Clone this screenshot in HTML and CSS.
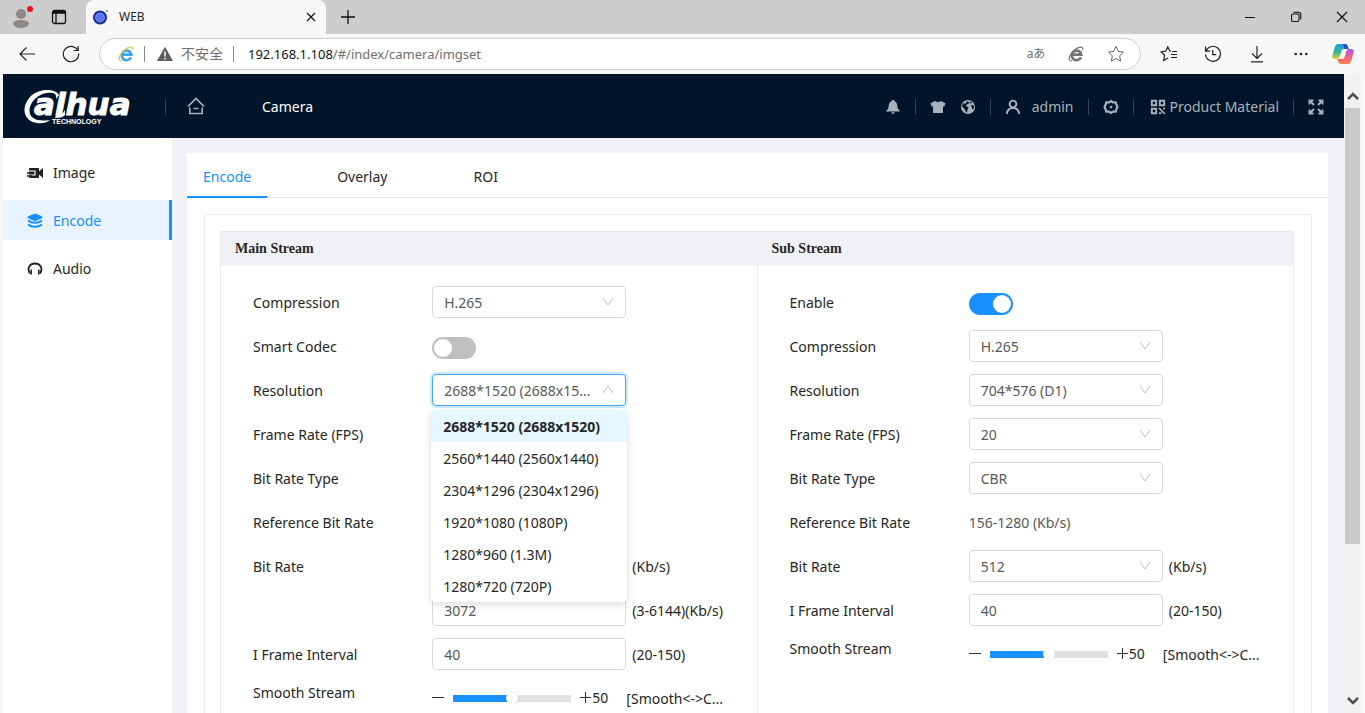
FILE: index.html
```html
<!DOCTYPE html>
<html lang="en">
<head>
    <meta charset="UTF-8">
    <meta name="viewport" content="width=device-width, initial-scale=1.0">
    <title>WEB</title>
    <link rel="stylesheet" href="styles.css">
</head>
<body>
    <!-- Browser window -->
    <div class="tab-strip">
        <button class="strip-btn profile" type="button" aria-label="Profile">
            <svg width="24" height="24" viewBox="0 0 24 24"><circle cx="11" cy="9" r="5" fill="#8b8886"/><path d="M3 19q0-4 8-4t8 4q-2 4-8 4t-8-4z" fill="#8b8886"/><circle cx="20" cy="4" r="3" fill="#e81123"/></svg>
        </button>
        <button class="strip-btn" type="button" aria-label="Tab actions">
            <svg width="16" height="16" viewBox="0 0 16 16" fill="none" stroke="#111" stroke-width="1.300"><rect x="1.500" y="1.500" width="13" height="13" rx="2"/><path d="M1.500 4h13M5 4v10" /><path d="M2 3h12" stroke-width="2"/></svg>
        </button>
        <div class="browser-tab">
            <svg width="16" height="16" viewBox="0 0 16 16"><circle cx="8" cy="8.500" r="7" fill="#1b2f9c"/><circle cx="8" cy="8.500" r="4.500" fill="#5b74f2" stroke="#a9b6ff" stroke-width=".6"/><circle cx="15" cy="2" r="1" fill="#b0703c"/></svg>
            <span class="browser-tab-title">WEB</span>
            <button class="icon-btn" type="button" aria-label="Close tab">
                <svg width="10" height="10" viewBox="0 0 10 10" stroke="#111" stroke-width="1.200"><path d="M1 1l8 8M9 1l-8 8"/></svg>
            </button>
        </div>
        <button class="strip-btn" type="button" aria-label="New tab">
            <svg width="14" height="14" viewBox="0 0 14 14" stroke="#111" stroke-width="1.300"><path d="M7 0v14M0 7h14"/></svg>
        </button>
        <div class="window-controls">
            <button type="button" aria-label="Minimize"><svg width="12" height="12" viewBox="0 0 12 12" stroke="#111"><path d="M1 6.500h10"/></svg></button>
            <button type="button" aria-label="Restore"><svg width="12" height="12" viewBox="0 0 12 12" fill="none" stroke="#111" stroke-width="1.100"><rect x="1.500" y="3" width="7.500" height="7.500" rx="1.500"/><path d="M3.500 1.200H8.500q2.300 0 2.300 2.300v5"/></svg></button>
            <button type="button" aria-label="Close"><svg width="12" height="12" viewBox="0 0 12 12" stroke="#111" stroke-width="1.200"><path d="M1 1l10 10M11 1L1 11"/></svg></button>
        </div>
    </div>

    <div class="toolbar">
        <button class="tool-btn" type="button" aria-label="Back">
            <svg width="18" height="16" viewBox="0 0 18 16" fill="none" stroke="#222" stroke-width="1.200"><path d="M17 8H2M8.500 1.500L2 8l6.500 6.500"/></svg>
        </button>
        <button class="tool-btn" type="button" aria-label="Refresh">
            <svg width="18" height="18" viewBox="0 0 18 18" fill="none" stroke="#222" stroke-width="1.200"><path d="M16.700 8.500A7.700 7.700 0 1 1 13.800 3L16 5M16.200 1v4.500h-4.700"/></svg>
        </button>
        <div class="address-bar">
            <svg width="16" height="16" viewBox="0 0 16 16" fill="none"><path d="M13 11.200A4.800 4.800 0 1 1 13.300 8.600H4.500" stroke="#3aa5e0" stroke-width="2.700"/><path d="M4 14.500C0 16 0 10 5.500 5S15.500 0 14.800 4" stroke="#c3cf4a" stroke-width="1.200"/></svg>
            <span class="bar-line"></span>
            <svg width="16" height="16" viewBox="0 0 16 16"><path d="M8 .8L16 15H0z" fill="#5c5c5c"/><path d="M8 5.500v5M8 11.800v1.600" stroke="#fff" stroke-width="1.500"/></svg>
            <span class="not-secure" lang="zh">不安全</span>
            <span class="bar-line url-line"></span>
            <div class="url" role="textbox" aria-label="Address" contenteditable="true" spellcheck="false"><span class="url-host">192.168.1.108</span>/#/index/camera/imgset</div>
            <button class="addr-btn translate" type="button">aあ</button>
            <button class="addr-btn" type="button" aria-label="Internet Explorer mode">
                <svg width="16" height="16" viewBox="0 0 16 16" fill="none"><path d="M13 11.200A4.800 4.800 0 1 1 13.300 8.600H4.500" stroke="#757575" stroke-width="2.700"/><path d="M4 14.500C0 16 0 10 5.500 5S15.500 0 14.800 4" stroke="#757575" stroke-width="1.100"/></svg>
            </button>
            <button class="addr-btn" type="button" aria-label="Add to favorites">
                <svg width="18" height="18" viewBox="0 0 18 18" fill="none" stroke="#666"><path d="M9 1.500l2.300 4.900 5.200.7-3.800 3.700.9 5.300L9 13.500l-4.600 2.600.9-5.300L1.500 7.100l5.200-.7z"/></svg>
            </button>
        </div>
        <button class="tool-btn" type="button" aria-label="Favorites">
            <svg width="18" height="18" viewBox="0 0 18 18" fill="none" stroke="#222" stroke-width="1.200"><path d="M11 6H9.800L7.800 1.800 5.800 6 1.200 6.800l3.400 3.500-.9 5.200 4.300-2.400M12 6.500h5M11 9.500h6M11 12.500h6"/></svg>
        </button>
        <button class="tool-btn" type="button" aria-label="History">
            <svg width="18" height="18" viewBox="0 0 18 18" fill="none" stroke="#222" stroke-width="1.200"><path d="M1.500 1.500v4.700h4.700M2 6A7.500 7.500 0 1 1 1.500 9.500M8.700 5v4.700h3.500"/></svg>
        </button>
        <button class="tool-btn" type="button" aria-label="Downloads">
            <svg width="14" height="18" viewBox="0 0 14 18" fill="none" stroke="#222" stroke-width="1.200"><path d="M7 1v12M2 8.500l5 5 5-5M1 16.800h12"/></svg>
        </button>
        <button class="tool-btn" type="button" aria-label="Settings and more">
            <svg width="14" height="4" viewBox="0 0 14 4" fill="#222"><circle cx="1.700" cy="2" r="1.300"/><circle cx="7" cy="2" r="1.300"/><circle cx="12.300" cy="2" r="1.300"/></svg>
        </button>
        <button class="tool-btn copilot" type="button" aria-label="Copilot">
            <svg width="22" height="22" viewBox="0 0 22 22">
                <defs>
                    <linearGradient id="cp1" x1="0" y1="0" x2="0" y2="1"><stop offset="0" stop-color="#1a9be8"/><stop offset=".6" stop-color="#3dbb8a"/><stop offset="1" stop-color="#f0cf28"/></linearGradient>
                    <linearGradient id="cp2" x1="0" y1="0" x2="0" y2="1"><stop offset="0" stop-color="#a35be8"/><stop offset=".5" stop-color="#ef5f8d"/><stop offset="1" stop-color="#f7824a"/></linearGradient>
                </defs>
                <path d="M6 1h7q2 0 2.600 2l1 3H12q-2 0-2.600 2L7.600 14q-.6 2-2.600 2H2.500Q-.5 16 .4 12.500L3 3.500Q3.800 1 6 1z" fill="url(#cp1)"/>
                <path d="M11 1h2q2 0 2.600 2l1 3h-4z" fill="#1a49c8"/>
                <path d="M16 21H9q-2 0-2.600-2l-1-3H10q2 0 2.600-2L14.400 8q.6-2 2.600-2h2.500q3 0 2.100 3.500L19 18.500q-.8 2.500-3 2.500z" fill="url(#cp2)"/>
            </svg>
        </button>
    </div>

    <div class="viewport">
        <div class="page">
            <header class="header">
                <svg class="logo" width="110" height="52" viewBox="0 0 110 52" role="img" aria-label="alhua technology">
                    <text class="logo-name" x="11" y="34">alhua</text>
                    <path d="M36 14C32 7 15 7 7 16C-2 26 0 40 14 42Q22 43 27 39Q14 41 9 36C1 27 14 9 30 12Q34 13 33 18z" fill="#fff"/>
                    <path d="M33 34Q39 35 42 29L42 34Q40 37 32 37z" fill="#fff"/>
                    <text class="logo-sub" x="29" y="43">TECHNOLOGY</text>
                </svg>
                <span class="divider"></span>
                <a class="home" href="#" aria-label="Home">
                    <svg width="18" height="20" viewBox="0 0 18 20" fill="none" stroke="#a6b1bd" stroke-width="1.700"><path d="M1 9.500L9 1.500l8 8M2.800 10.500v6h12.400v-6M6.500 11.500h5"/></svg>
                </a>
                <a class="crumb" href="#">Camera</a>
                <div class="header-tools">
                    <button type="button" aria-label="Alarm"><svg width="16" height="16" viewBox="0 0 16 16" fill="#a6b1bd"><path d="M8 0.800q1.200 0 1.200 1.300Q12 3 12.300 7q.2 3.500 2.400 4.500v1H1.300v-1Q3.500 10.500 3.700 7 4 3 6.800 2.100 6.800.8 8 .8zM6.300 13.200h3.400q-.3 1.800-1.700 1.800t-1.700-1.800z"/></svg></button>
                    <span class="divider"></span>
                    <button type="button" aria-label="Theme"><svg width="16" height="16" viewBox="0 0 16 16" fill="#a6b1bd"><path d="M5 2q3 2 6 0l4.500 2.200-1.300 3.500-1.200-.4V14H3V7.300l-1.200.4L.5 4.200z"/></svg></button>
                    <button type="button" aria-label="Language"><svg width="16" height="16" viewBox="0 0 16 16"><circle cx="8" cy="8" r="7" fill="#a6b1bd"/><path d="M7 2.200l2.200 1L8.500 5l-2 .5L6 7.300l2.500 1L7.500 11l-1 3-2-4L2 7.300 3 4.200l2.500.5zM11 6l3 .5-.3 3.500-1.500-.3zM9.500 2l3 2-2 .5z" fill="#001529"/></svg></button>
                    <span class="divider"></span>
                    <button class="user" type="button"><svg width="16" height="16" viewBox="0 0 16 16" fill="none" stroke="#a6b1bd" stroke-width="1.900"><circle cx="8" cy="5" r="3.400"/><path d="M1.800 15q.7-6 6.200-6t6.200 6"/></svg>admin</button>
                    <span class="divider"></span>
                    <button type="button" aria-label="Settings"><svg width="16" height="16" viewBox="0 0 16 16" fill="none" stroke="#a6b1bd"><path d="M8 2l2 1.300h2.700L13.500 6 14.500 8l-1 2-.8 2.700H10L8 14l-2-1.300H3.300L2.500 10l-1-2 1-2 .8-2.700H6z" stroke-width="2.200"/><circle cx="8" cy="8" r="1.300" fill="#a6b1bd" stroke="none"/></svg></button>
                    <span class="divider"></span>
                    <button class="material" type="button"><svg width="16" height="16" viewBox="0 0 16 16" fill="none" stroke="#a6b1bd" stroke-width="1.900"><path d="M1.800 1.800h4.400v4.400H1.800zM9.800 1.800h4.400v4.400H9.800zM1.800 9.800h4.400v4.400H1.800z"/><path d="M9 9l6 6M13 9.500h2M9 14.200h2.500" stroke-width="1.700"/></svg>Product Material</button>
                    <span class="divider"></span>
                    <button type="button" aria-label="Full screen"><svg width="16" height="16" viewBox="0 0 16 16" fill="none" stroke="#a6b1bd" stroke-width="1.900"><path d="M1.500 5.500v-4h4M1.500 1.500L6 6M10.500 1.500h4v4M14.500 1.500L10 6M14.500 10.500v4h-4M14.500 14.500L10 10M5.500 14.500h-4v-4M1.500 14.500L6 10"/></svg></button>
                </div>
            </header>

            <div class="main">
                <nav class="sidebar">
                    <a class="menu-item" href="#">
                        <svg width="16" height="16" viewBox="0 0 16 16"><path d="M3 3h8q1 0 1 1v8q0 1-1 1H3q-1 0-1-1V4q0-1 1-1z" fill="#222"/><path d="M0 6h8v4H1.500" stroke="#fff" stroke-width="1.200" fill="none"/><path d="M0 8h7M0 11h5" stroke="#222" stroke-width="1.300"/><path d="M12 6.500L16 3v10l-4-3.500z" fill="#222"/></svg>
                        Image
                    </a>
                    <a class="menu-item active" href="#">
                        <svg width="16" height="16" viewBox="0 0 16 16"><path d="M1 3.800L8 1l7 2.800v1L8 7.600 1 4.800z" fill="#1890ff" stroke="#1890ff" stroke-linejoin="round"/><path d="M1 7.500q3 2.300 7 2.300t7-2.300M1 11.500q3 2.300 7 2.300t7-2.300" fill="none" stroke="#1890ff" stroke-width="2"/></svg>
                        Encode
                    </a>
                    <a class="menu-item" href="#">
                        <svg width="16" height="16" viewBox="0 0 16 16" fill="none" stroke="#222"><path d="M3 12.500C-.5 7 3 2.500 8 2.500s8.500 4.500 5 10" stroke-width="1.800"/><path d="M4.200 8.500v5M11.800 8.500v5" stroke-width="1.600"/></svg>
                        Audio
                    </a>
                </nav>

                <main class="content">
                    <div class="tabs">
                        <button class="tab active" type="button">Encode</button>
                        <button class="tab" type="button">Overlay</button>
                        <button class="tab" type="button">ROI</button>
                    </div>
                    <div class="tab-body">
                        <div class="streams">
                            <section class="stream">
                                <h2>Main Stream</h2>
                                <form class="form">
                                    <div class="row">
                                        <label for="m-comp">Compression</label>
                                        <select id="m-comp"><option>H.265</option></select>
                                    </div>
                                    <div class="row">
                                        <label for="m-smart">Smart Codec</label>
                                        <input class="switch" type="checkbox" id="m-smart">
                                    </div>
                                    <div class="row">
                                        <label for="m-res">Resolution</label>
                                        <div class="select-wrap">
                                            <select class="open" id="m-res"><option>2688*1520 (2688x1520)</option></select>
                                            <ul class="dropdown" role="listbox" aria-label="Resolution">
                                                <li class="selected" role="option" aria-selected="true">2688*1520 (2688x1520)</li>
                                                <li role="option">2560*1440 (2560x1440)</li>
                                                <li role="option">2304*1296 (2304x1296)</li>
                                                <li role="option">1920*1080 (1080P)</li>
                                                <li role="option">1280*960 (1.3M)</li>
                                                <li role="option">1280*720 (720P)</li>
                                            </ul>
                                        </div>
                                    </div>
                                    <div class="row">
                                        <label for="m-fps">Frame Rate (FPS)</label>
                                        <select id="m-fps"></select>
                                    </div>
                                    <div class="row">
                                        <label for="m-type">Bit Rate Type</label>
                                        <select id="m-type"></select>
                                    </div>
                                    <div class="row">
                                        <span>Reference Bit Rate</span>
                                    </div>
                                    <div class="row">
                                        <label for="m-rate">Bit Rate</label>
                                        <select id="m-rate"></select>
                                        <span class="unit">(Kb/s)</span>
                                    </div>
                                    <div class="row">
                                        <span></span>
                                        <input class="text" type="text" value="3072" aria-label="Custom bit rate">
                                        <span class="unit">(3-6144)(Kb/s)</span>
                                    </div>
                                    <div class="row">
                                        <label for="m-iframe">I Frame Interval</label>
                                        <input class="text" type="text" id="m-iframe" value="40">
                                        <span class="unit">(20-150)</span>
                                    </div>
                                    <div class="row slider-row">
                                        <label for="m-smooth">Smooth Stream</label>
                                        <div class="slider">
                                            <button class="step" type="button" aria-label="Decrease"><svg width="12" height="12" viewBox="0 0 12 12" stroke="#333"><path d="M0 5.500h12"/></svg></button>
                                            <input type="range" id="m-smooth" min="0" max="100" value="50">
                                            <button class="step" type="button" aria-label="Increase"><svg width="12" height="12" viewBox="0 0 12 12" stroke="#333"><path d="M0 5.500h11M5.500 0v11"/></svg></button>
                                            <output>50</output>
                                        </div>
                                        <span>[Smooth&lt;-&gt;C...</span>
                                    </div>
                                </form>
                            </section>

                            <section class="stream">
                                <h2>Sub Stream</h2>
                                <form class="form">
                                    <div class="row">
                                        <label for="s-enable">Enable</label>
                                        <input class="switch" type="checkbox" id="s-enable" checked>
                                    </div>
                                    <div class="row">
                                        <label for="s-comp">Compression</label>
                                        <select id="s-comp"><option>H.265</option></select>
                                    </div>
                                    <div class="row">
                                        <label for="s-res">Resolution</label>
                                        <select id="s-res"><option>704*576 (D1)</option></select>
                                    </div>
                                    <div class="row">
                                        <label for="s-fps">Frame Rate (FPS)</label>
                                        <select id="s-fps"><option>20</option></select>
                                    </div>
                                    <div class="row">
                                        <label for="s-type">Bit Rate Type</label>
                                        <select id="s-type"><option>CBR</option></select>
                                    </div>
                                    <div class="row">
                                        <span>Reference Bit Rate</span>
                                        <span class="value">156-1280 (Kb/s)</span>
                                    </div>
                                    <div class="row">
                                        <label for="s-rate">Bit Rate</label>
                                        <select id="s-rate"><option>512</option></select>
                                        <span class="unit">(Kb/s)</span>
                                    </div>
                                    <div class="row">
                                        <label for="s-iframe">I Frame Interval</label>
                                        <input class="text" type="text" id="s-iframe" value="40">
                                        <span class="unit">(20-150)</span>
                                    </div>
                                    <div class="row slider-row">
                                        <label for="s-smooth">Smooth Stream</label>
                                        <div class="slider">
                                            <button class="step" type="button" aria-label="Decrease"><svg width="12" height="12" viewBox="0 0 12 12" stroke="#333"><path d="M0 5.500h12"/></svg></button>
                                            <input type="range" id="s-smooth" min="0" max="100" value="50">
                                            <button class="step" type="button" aria-label="Increase"><svg width="12" height="12" viewBox="0 0 12 12" stroke="#333"><path d="M0 5.500h11M5.500 0v11"/></svg></button>
                                            <output>50</output>
                                        </div>
                                        <span>[Smooth&lt;-&gt;C...</span>
                                    </div>
                                </form>
                            </section>
                        </div>
                    </div>
                </main>
            </div>
        </div>

        <div class="scrollbar">
            <svg width="12" height="8" viewBox="0 0 12 8" fill="none" stroke="#505050" stroke-width="2.500"><path d="M1 7l5-5 5 5"/></svg>
            <div class="scroll-track"><div class="scroll-thumb"></div></div>
            <svg width="12" height="8" viewBox="0 0 12 8" fill="none" stroke="#505050" stroke-width="2.500"><path d="M1 1l5 5 5-5"/></svg>
        </div>
    </div>
</body>
</html>
```
FILE: styles.css
```css
* {
    box-sizing: border-box;
}
body {
    margin: 0;
    height: 100vh;
    display: flex;
    flex-direction: column;
    overflow: hidden;
    font-family: 'Noto Sans', 'Noto Sans CJK SC', sans-serif;
    font-size: 14px;
    line-height: 20px;
    color: #262626;
    background: #f7f7f7;
}
button {
    border: 0;
    padding: 0;
    background: none;
    font: inherit;
    color: inherit;
    display: flex;
    align-items: center;
    justify-content: center;
}
a {
    color: inherit;
    text-decoration: none;
}
svg {
    display: block;
    flex: none;
}

/* Browser window */
.tab-strip {
    display: flex;
    flex: none;
    height: 34px;
    background: #cdcdcd;
}
.strip-btn {
    width: 44px;
}
.strip-btn.profile {
    width: 37px;
    padding-left: 6px;
}
.browser-tab {
    display: flex;
    align-items: center;
    width: 240px;
    margin-left: 5px;
    padding: 0 10px 0 6px;
    background: #f7f7f7;
    border-radius: 8px 8px 0 0;
    font-size: 12px;
}
.browser-tab-title {
    flex: 1;
    margin-left: 11px;
}
.window-controls {
    display: flex;
    margin-left: auto;
}
.window-controls button {
    width: 46px;
}
.toolbar {
    display: flex;
    flex: none;
    align-items: center;
    height: 40px;
    padding: 0 2px 0 5px;
}
.tool-btn {
    width: 44px;
    height: 32px;
}
.copilot {
    width: 40px;
}
.address-bar {
    display: flex;
    flex: 1;
    align-items: center;
    height: 32px;
    margin: 0 6px;
    padding: 0 4px 0 18px;
    border: 1px solid #cfcfcf;
    border-radius: 16px;
    background: #fff;
    color: #707070;
}
.bar-line {
    width: 1px;
    height: 16px;
    margin: 0 12px 0 10px;
    background: #8a8a8a;
}
.url-line {
    margin-right: 14px;
}
.not-secure {
    margin-left: 8px;
}
.url {
    flex: 1;
    font-size: 13px;
    outline: 0;
}
.url-host {
    color: #111;
}
.addr-btn {
    width: 40px;
    height: 30px;
}
.translate {
    font-size: 12px;
}

/* Page frame */
.viewport {
    display: flex;
    flex: 1;
    min-height: 0;
    padding: 0 4px 0 3px;
}
.page {
    display: flex;
    flex: 1;
    flex-direction: column;
    min-width: 0;
    overflow: hidden;
    background: #f0f2f5;
}
.scrollbar {
    display: flex;
    flex-direction: column;
    align-items: center;
    width: 17px;
    padding: 18px 1px 8px;
    background: #f1f1f1;
    border-radius: 0 6px 0 0;
}
.scroll-track {
    flex: 1;
    width: 100%;
    margin: 8px 0;
}
.scroll-thumb {
    height: 75%;
    background: #c9c9c9;
}

/* Header */
.header {
    display: flex;
    flex: none;
    align-items: center;
    height: 64px;
    padding: 1px 20px 0;
    background: #001529;
    color: #a6b1bd;
}
.logo {
    overflow: visible;
}
.logo-name {
    font-family: 'DejaVu Sans', sans-serif;
    font-size: 31px;
    font-weight: bold;
    font-style: italic;
    fill: #fff;
    stroke: #fff;
}
.logo-sub {
    font-family: 'Liberation Sans', sans-serif;
    font-size: 7px;
    font-weight: bold;
    fill: #fff;
}
.divider {
    width: 1px;
    height: 16px;
    background: #33445a;
}
.logo + .divider {
    margin-left: 32px;
}
.home {
    margin: 0 57px 0 21px;
}
.crumb {
    color: #fff;
}
.header-tools {
    display: flex;
    align-items: center;
    gap: 14px;
    margin-left: auto;
}
.user {
    gap: 11px;
}
.material {
    gap: 4px;
    padding-left: 2px;
}

/* Sidebar */
.main {
    display: flex;
    flex: 1;
    min-height: 0;
}
.sidebar {
    display: flex;
    flex-direction: column;
    flex: none;
    gap: 8px;
    width: 169px;
    padding-top: 14px;
    background: #fff;
}
.menu-item {
    display: flex;
    align-items: center;
    gap: 10px;
    height: 40px;
    padding: 2px 0 0 24px;
}
.menu-item.active {
    color: #1890ff;
    background: #e8f3ff;
    border-right: 3px solid #1890ff;
}

/* Content */
.content {
    flex: 1;
    min-width: 0;
    height: max-content;
    margin: 15px 16px 0 15px;
    background: #fff;
}
.tabs {
    display: flex;
    gap: 54px;
    height: 45px;
    border-bottom: 1px solid #e8e8e8;
}
.tab {
    height: 45px;
    padding: 4px 16px 0;
    border-bottom: 2px solid transparent;
}
.tab.active {
    color: #1890ff;
    border-color: #1890ff;
}
.tab-body {
    margin: 16px 16px 16px 17px;
    padding: 16px 17px 16px 15px;
    border: 1px solid #ececee;
}
.streams {
    display: flex;
    border: 1px solid #e8eaee;
}
.stream {
    flex: 1;
    min-width: 0;
}
.stream + .stream {
    border-left: 1px solid #ececee;
}
.stream h2 {
    margin: 0;
    padding: 0 14px;
    font-family: 'Liberation Serif', serif;
    font-size: 14px;
    line-height: 34px;
    background: #f0f1f4;
}
.form {
    padding: 14px 0 20px 32px;
}
.row {
    display: grid;
    grid-template-columns: minmax(0, 179fr) minmax(0, 194fr) minmax(0, 130fr);
    align-items: center;
    height: 44px;
}
.row label, .row span {
    padding-top: 2px;
}
.row .unit {
    padding-left: 6px;
    white-space: nowrap;
}
.value {
    color: #595959;
}
select, .text {
    width: 100%;
    height: 32px;
    padding: 1px 30px 0 11px;
    border: 1px solid #d9d9d9;
    border-radius: 4px;
    font: inherit;
    color: #595959;
    background: #fff;
    appearance: none;
    outline: 0;
}
select {
    background: url("data:image/svg+xml,%3Csvg xmlns='http://www.w3.org/2000/svg' width='12' height='12' fill='none' stroke='%23bfbfbf'%3E%3Cpath d='M1 2l5 7 5-7'/%3E%3C/svg%3E") no-repeat right 11px center #fff;
    text-overflow: ellipsis;
    overflow: hidden;
    white-space: nowrap;
}
select.open {
    border-color: #40a9ff;
    box-shadow: 0 0 0 2px rgba(24, 144, 255, 0.2);
    background-image: url("data:image/svg+xml,%3Csvg xmlns='http://www.w3.org/2000/svg' width='12' height='12' fill='none' stroke='%23bfbfbf'%3E%3Cpath d='M1 9l5-7 5 7'/%3E%3C/svg%3E");
}
.select-wrap {
    position: relative;
    min-width: 0;
}
.dropdown {
    position: absolute;
    z-index: 1;
    top: 36px;
    left: -1px;
    right: -1px;
    margin: 0;
    padding: 0;
    list-style: none;
    background: #fff;
    border-radius: 4px;
    box-shadow: 0 2px 8px rgba(0, 0, 0, 0.15);
}
.dropdown li {
    height: 32px;
    padding: 1px 0 0 12px;
    line-height: 32px;
    white-space: nowrap;
}
.dropdown .selected {
    font-weight: 700;
    background: #e6f7ff;
}

.switch {
    width: 44px;
    height: 22px;
    margin: 4px 0 0;
    padding: 2px;
    border-radius: 11px;
    background: #bfbfbf;
    appearance: none;
}
.switch::before {
    content: "";
    display: block;
    width: 18px;
    height: 18px;
    border-radius: 50%;
    background: #fff;
}
.switch:checked {
    background: #1890ff;
}
.switch:checked::before {
    margin-left: auto;
}

.slider-row label {
    align-self: start;
    line-height: 30px;
}
.slider {
    display: flex;
    align-items: center;
    padding-right: 18px;
}
.slider input {
    flex: 1;
    min-width: 0;
    height: 12px;
    margin: 0 9px;
    appearance: none;
    background: linear-gradient(to right, #1890ff 50%, #e1e1e3 50%) center / 100% 7px no-repeat;
    border-radius: 4px;
}
.slider input::-webkit-slider-thumb {
    appearance: none;
    width: 12px;
    height: 12px;
    border-radius: 50%;
    background: #fff;
    box-shadow: 0 0 2px rgba(0, 0, 0, 0.15);
}
```
